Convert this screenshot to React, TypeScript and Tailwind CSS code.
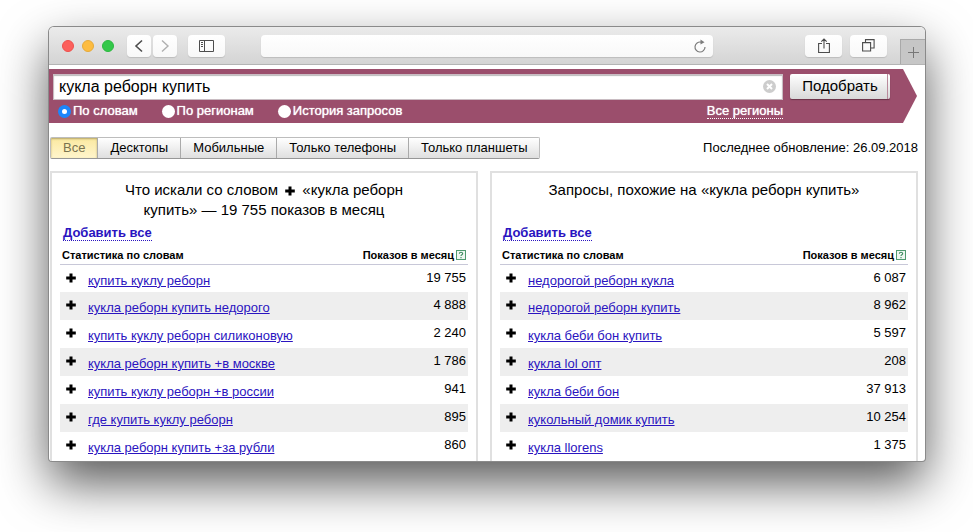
import React, { useState } from 'react';

// --- Types ---
interface Phrase {
  text: string;
  shows: string;
}

// --- Data ---
const withWord: Phrase[] = [
  { text: 'купить куклу реборн', shows: '19 755' },
  { text: 'кукла реборн купить недорого', shows: '4 888' },
  { text: 'купить куклу реборн силиконовую', shows: '2 240' },
  { text: 'кукла реборн купить +в москве', shows: '1 786' },
  { text: 'купить куклу реборн +в россии', shows: '941' },
  { text: 'где купить куклу реборн', shows: '895' },
  { text: 'кукла реборн купить +за рубли', shows: '860' },
];

const similar: Phrase[] = [
  { text: 'недорогой реборн кукла', shows: '6 087' },
  { text: 'недорогой реборн купить', shows: '8 962' },
  { text: 'кукла беби бон купить', shows: '5 597' },
  { text: 'кукла lol опт', shows: '208' },
  { text: 'кукла беби бон', shows: '37 913' },
  { text: 'кукольный домик купить', shows: '10 254' },
  { text: 'кукла llorens', shows: '1 375' },
];

const modes = ['По словам', 'По регионам', 'История запросов'];
const devices = ['Все', 'Десктопы', 'Мобильные', 'Только телефоны', 'Только планшеты'];

// --- Icons ---
const PlusIcon = ({ className = '' }: { className?: string }) => (
  <svg className={className} width="10" height="10" viewBox="0 0 10 10" fill="currentColor">
    <path d="M3.5 0.5h3v3h3.300v3h-3.300v3h-3v-3h-3.300v-3h3.300z" />
  </svg>
);

const HelpIcon = () => (
  <svg width="10" height="10" viewBox="0 0 10 10" fill="none">
    <rect x="0.5" y="0.5" width="9" height="9" fill="#eef7f1" stroke="#4f9a70" />
    <path d="M3.3 3.7c0-2 3.4-2 3.4 0C6.700 4.900 5 4.700 5 6M5 7v1.200" stroke="#3c8a5e" strokeWidth="1.100" />
  </svg>
);

// --- Browser toolbar ---
function Toolbar() {
  const button = 'flex h-[22px] items-center justify-center rounded bg-linear-to-b from-white to-[#f8f8f8] shadow-[0_1px_1px_#bdbdbd] text-[#4d4d4d]';

  return (
    <div className="flex h-[38px] items-center border-b border-[#b4b4b4] bg-linear-to-b from-[#ebebeb] to-[#d4d4d4]">
      <div className="flex w-[212px] shrink-0 items-center">
        <div className="ml-[13px] flex gap-2">
          <span className="size-3 rounded-full border border-[#ee504d] bg-[#fc605c]" />
          <span className="size-3 rounded-full border border-[#e6aa3a] bg-[#fdbc40]" />
          <span className="size-3 rounded-full border border-[#2cb840] bg-[#34c84a]" />
        </div>
        <button aria-label="Назад" className={`${button} ml-[13px] w-6`}>
          <svg width="10" height="14" viewBox="0 0 10 14" fill="none" stroke="currentColor" strokeWidth="1.6"><path d="M8 1.500L2 7l6 5.500" /></svg>
        </button>
        <button aria-label="Вперёд" className={`${button} ml-0.5 w-6`}>
          <svg width="10" height="14" viewBox="0 0 10 14" fill="none" stroke="#b0b0b0" strokeWidth="1.400"><path d="M2 1.500L8 7l-6 5.500" /></svg>
        </button>
        <button aria-label="Боковое меню" className={`${button} ml-[11px] w-[37px]`}>
          <svg width="15" height="12" viewBox="0 0 15 12" fill="none" stroke="currentColor">
            <path d="M0.500 0.500h14v11h-14zM5.500 0.500v11M2 2.500h2M2 4.500h2M2 6.500h2" />
          </svg>
        </button>
      </div>
      <div className="relative flex-1">
        <input aria-label="Адрес" className="block h-[22px] w-full rounded bg-linear-to-b from-white to-[#f8f8f8] px-3 text-[12px] shadow-[0_1px_1px_#bdbdbd] outline-none" />
        <button aria-label="Обновить" className="absolute top-1 right-[6px]">
          <svg width="14" height="15" viewBox="0 0 14 15" fill="none" stroke="#7c7c7c" strokeWidth="1.200">
            <path d="M8 3.100A5 5 0 1 0 12 8" />
            <path d="M7.500 0.400L11.500 3.300 7.500 5.400z" fill="#7c7c7c" stroke="none" />
          </svg>
        </button>
      </div>
      <div className="flex w-[212px] shrink-0 items-center justify-end self-stretch">
        <button aria-label="Поделиться" className={`${button} w-[37px]`}>
          <svg width="12" height="16" viewBox="0 0 12 16" fill="none" stroke="currentColor" strokeWidth="1.100">
            <path d="M4 5.500H0.600v9h10.800v-9H8M6 10.500V1.200M3.300 3.700L6 1l2.700 2.700" />
          </svg>
        </button>
        <button aria-label="Все вкладки" className={`${button} ml-2 w-[37px]`}>
          <svg width="13" height="13" viewBox="0 0 13 13" fill="none" stroke="currentColor" strokeWidth="1.100">
            <path d="M0.600 3.600h8v8.400h-8zM3.500 3.500V0.600h8.600v8.400H9" />
          </svg>
        </button>
        <button aria-label="Новая вкладка" className="ml-[13px] flex h-[25px] w-[25px] items-center justify-center self-end border-t border-l border-[#a9a9a9] bg-[#c6c6c6]">
          <svg width="11" height="11" viewBox="0 0 11 11" fill="none" stroke="#777"><path d="M5.500 0v11M0 5.500h11" /></svg>
        </button>
      </div>
    </div>
  );
}

// --- Search bar ---
function SearchBar() {
  const [query, setQuery] = useState('кукла реборн купить');
  const [mode, setMode] = useState(modes[0]);

  return (
    <form className="mr-2 flex h-[54px] items-start bg-[#9b4e6c] pt-[5px] pr-[27px] pl-1 [clip-path:polygon(0_0,calc(100%-14px)_0,100%_50%,calc(100%-14px)_100%,0_100%)]">
      <div className="flex-1">
        <div className="relative">
          <input
            aria-label="Слова"
            value={query}
            onChange={(e) => setQuery(e.target.value)}
            className="block h-[26px] w-full border border-[#c9bcc2] bg-white px-[5px] text-[16px] text-black shadow-[inset_0_1px_1px_#bbb] outline-none"
          />
          <button type="button" aria-label="Очистить" onClick={() => setQuery('')} className="absolute top-[6px] right-[7px]">
            <svg width="13" height="13" viewBox="0 0 13 13" fill="none">
              <circle cx="6.500" cy="6.500" r="6.500" fill="#cdcdcd" />
              <path d="M4 4l5 5M9 4l-5 5" stroke="#fff" strokeWidth="2" />
            </svg>
          </button>
        </div>
        <div className="flex h-[22px] items-center pl-[5px] text-[13px] text-white">
          {modes.map((m) => (
            <label key={m} className="mr-6 flex items-center gap-0.5 [text-shadow:0_0_1px_#fff]">
              <input
                type="radio"
                name="mode"
                checked={mode === m}
                onChange={() => setMode(m)}
                className="size-[13px] appearance-none rounded-full bg-white checked:border-[4px] checked:border-[#1c86fb]"
              />
              {m}
            </label>
          ))}
          <a href="#regions" className="ml-auto border-b border-dotted border-white leading-[14px] [text-shadow:0_0_1px_#fff]">Все регионы</a>
        </div>
      </div>
      <button type="button" className="relative ml-[7px] h-[25px] w-[100px] rounded-xs bg-linear-to-b from-white to-[#d9d9d9] text-[15px] text-black shadow-[0_1px_1px_#6b3349]">
        Подобрать
        <span className="absolute inset-y-0 right-[2px] w-px bg-[#b98a9c]" />
      </button>
    </form>
  );
}

// --- Results panel ---
function Panel({ title, rows }: { title: React.ReactNode; rows: Phrase[] }) {
  return (
    <section className="flex-1 border-2 border-b-0 border-[#e0e0e0] px-2 pt-[7px] pb-px">
      <h2 className="mx-auto min-h-10 max-w-[320px] text-center text-[15px] leading-5">{title}</h2>
      <a href="#add" className="mt-[5px] ml-[3px] block w-fit border-b border-dotted border-[#2a14c0] text-[13px] leading-[15px] font-bold text-[#2a14c0]">Добавить все</a>
      <table className="mt-[5px] w-full border-collapse">
        <thead>
          <tr className="h-[18px] border-b border-[#c8c8d8] text-[11px] leading-4">
            <th colSpan={2} className="pl-0.5 text-left">Статистика по словам</th>
            <th className="pr-0.5">
              <span className="flex items-center justify-end gap-0.5">Показов в месяц<HelpIcon /></span>
            </th>
          </tr>
        </thead>
        <tbody>
          {rows.map((row) => (
            <tr key={row.text} className="h-7 align-top text-[13px] leading-4 even:bg-[#eee]">
              <td className="w-7 pt-2 pl-[6px]">
                <button aria-label="Добавить" className="block"><PlusIcon /></button>
              </td>
              <td className="pt-2"><a href="#phrase" className="text-[#2a14c0] underline">{row.text}</a></td>
              <td className="pt-[5px] pr-0.5 text-right">{row.shows}</td>
            </tr>
          ))}
        </tbody>
      </table>
    </section>
  );
}

function App() {
  const [device, setDevice] = useState(devices[0]);

  return (
    <div className="min-h-screen bg-white pt-[27px] pr-12 pb-[70px] pl-[49px] font-['Liberation_Sans',Arial,sans-serif] text-black">
      <div className="overflow-hidden rounded-t-[5px] rounded-b-[3px] bg-white shadow-[0_0_0_1px_#8a8a8a,0_22px_50px_rgba(0,0,0,0.66)]">
        <Toolbar />
        <main className="pt-1">
          <SearchBar />

          <div className="mt-[14px] mr-[7px] ml-px flex items-center justify-between text-[13px]">
            <div className="flex overflow-hidden rounded-xs border border-[#bdbdbd] border-b-[#979797]">
              {devices.map((d) => (
                <button
                  key={d}
                  onClick={() => setDevice(d)}
                  className={`h-5 border-l border-[#aaa] px-3 first:border-l-0 ${device === d ? 'bg-linear-to-b from-[#fbe9a0] to-[#fff5cc] text-[#7a7350] shadow-[inset_0_1px_2px_#b5a566]' : 'bg-linear-to-b from-white to-[#dfdfdf]'}`}
                >
                  {d}
                </button>
              ))}
            </div>
            <p>Последнее обновление: 26.09.2018</p>
          </div>

          <div className="mt-3 mr-[7px] ml-px flex gap-3">
            <Panel
              title={
                <>
                  <span>Что искали со словом</span> <PlusIcon className="mx-[3px] inline align-[-1px]" /> <span>«кукла реборн</span>{' '}
                  <span>купить» — 19 755 показов в месяц</span>
                </>
              }
              rows={withWord}
            />
            <Panel title="Запросы, похожие на «кукла реборн купить»" rows={similar} />
          </div>
        </main>
      </div>
    </div>
  );
}

export default App;
